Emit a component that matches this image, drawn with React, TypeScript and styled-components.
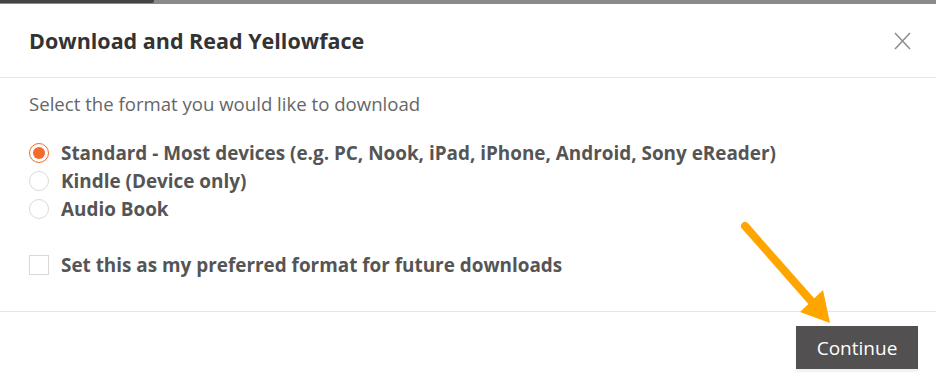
import React, { useState } from 'react';
import styled, { createGlobalStyle } from 'styled-components';

const GlobalStyle = createGlobalStyle`
  body {
    margin: 0;
    background: #ffffff;
    font-family: 'Open Sans', 'Noto Sans', sans-serif;
  }
`;

const Page = styled.div`
  position: relative;
  width: 936px;
  height: 382px;
  overflow: hidden;
  background: #ffffff;
`;

const Progress = styled.div`
  height: 4px;
  background: #8a8a8a;
  display: flex;
`;

const ProgressFill = styled.div`
  background: #444444;
  height: 3px;
  border-bottom-right-radius: 2px;
`;

const Header = styled.div`
  height: 73px;
  display: flex;
  align-items: center;
  justify-content: space-between;
  padding: 0 24px 0 29px;
  border-bottom: 1px solid #e6e6e6;
`;

const Title = styled.h1`
  margin: 0;
  font-size: 21.5px;
  font-weight: 700;
  color: #333333;
`;

const CloseButton = styled.button`
  border: none;
  background: none;
  padding: 0;
  width: 20px;
  height: 20px;
  display: flex;
  align-items: center;
  justify-content: center;
  cursor: pointer;
`;

const Body = styled.div`
  padding: 14px 29px 32px;
  display: flex;
  flex-direction: column;
`;

const Prompt = styled.p`
  margin: 0 0 23px;
  font-size: 18.6px;
  line-height: 24px;
  color: #666666;
`;

const OptionList = styled.div`
  display: flex;
  flex-direction: column;
  margin-bottom: 28px;
`;

const Option = styled.label`
  display: flex;
  align-items: center;
  gap: 12px;
  height: 28px;
  font-size: 18.9px;
  font-weight: 700;
  color: #555555;
  cursor: pointer;
`;

const Radio = styled.span<{ $checked: boolean }>`
  width: 20px;
  height: 20px;
  box-sizing: border-box;
  border-radius: 50%;
  border: 1.5px solid ${(p) => (p.$checked ? '#f26b2a' : '#d9d9d9')};
  display: flex;
  align-items: center;
  justify-content: center;
  flex-shrink: 0;

  &::after {
    content: '';
    width: 12px;
    height: 12px;
    border-radius: 50%;
    background: ${(p) => (p.$checked ? '#f26b2a' : 'transparent')};
  }
`;

const Checkbox = styled.span`
  width: 20px;
  height: 20px;
  box-sizing: border-box;
  border: 1.5px solid #d9d9d9;
  flex-shrink: 0;
`;

const Footer = styled.div`
  border-top: 1px solid #e6e6e6;
  display: flex;
  justify-content: flex-end;
  padding: 14px 18px 0;
`;

const ContinueButton = styled.button`
  width: 122px;
  height: 43px;
  border: none;
  background: #525050;
  color: #ffffff;
  font-family: 'Open Sans', 'Noto Sans', sans-serif;
  font-size: 19px;
  box-shadow: 0 3px 2px rgba(0, 0, 0, 0.06);
  cursor: pointer;
`;

const Arrow = styled.svg`
  position: absolute;
  left: 0;
  top: 0;
  pointer-events: none;
`;

const formats = [
  'Standard - Most devices (e.g. PC, Nook, iPad, iPhone, Android, Sony eReader)',
  'Kindle (Device only)',
  'Audio Book',
];

const App: React.FC = () => {
  const [selected, setSelected] = useState(0);

  return (
    <Page>
      <GlobalStyle />
      <Progress>
        <ProgressFill style={{ width: 154 }} />
      </Progress>
      <Header>
        <Title>Download and Read Yellowface</Title>
        <CloseButton aria-label="Close">
          <svg width="17" height="18" viewBox="0 0 17 18">
            <path d="M1 1 L16 17 M16 1 L1 17" stroke="#8c8c8c" strokeWidth="1.5" fill="none" />
          </svg>
        </CloseButton>
      </Header>

      <Body>
        <Prompt>Select the format you would like to download</Prompt>
        <OptionList>
          {formats.map((f, i) => (
            <Option key={f} onClick={() => setSelected(i)}>
              <Radio $checked={selected === i} />
              {f}
            </Option>
          ))}
        </OptionList>
        <Option>
          <Checkbox />
          Set this as my preferred format for future downloads
        </Option>
      </Body>

      <Footer>
        <ContinueButton>Continue</ContinueButton>
      </Footer>

      <Arrow width="936" height="382" viewBox="0 0 936 382">
        <line x1="745" y1="226" x2="812" y2="302" stroke="#ffa500" strokeWidth="8" strokeLinecap="round" />
        <polygon points="800,312 823,290 830,323" fill="#ffa500" />
      </Arrow>
    </Page>
  );
};

export default App;
